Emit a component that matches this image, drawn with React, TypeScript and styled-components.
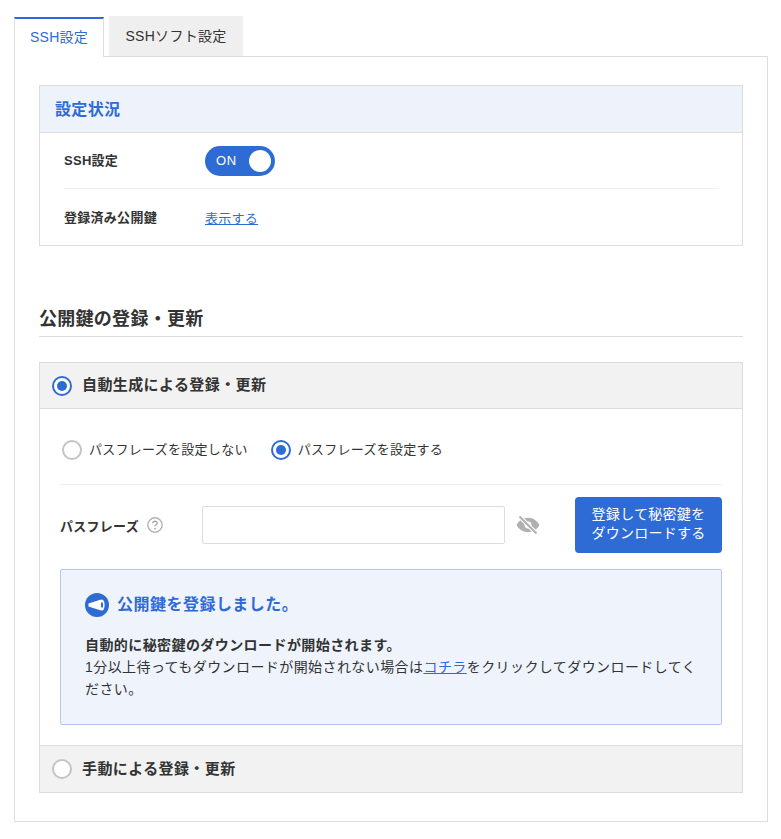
import React from 'react'
import styled, { createGlobalStyle } from 'styled-components'

const Global = createGlobalStyle`
  html, body {
    margin: 0;
    padding: 0;
    background: #fff;
  }
  body {
    font-family: "Liberation Sans", "Noto Sans CJK JP", sans-serif;
    color: #333;
    font-size: 14px;
    letter-spacing: 0.02em;
  }
  * {
    box-sizing: border-box;
  }
`

const Page = styled.div`
  width: 781px;
  height: 839px;
  padding: 16px 13px 0 14px;
`

const TabBar = styled.div`
  display: flex;
  align-items: flex-end;
  height: 41px;
  margin-bottom: -1px;
  position: relative;
  z-index: 1;
`

const Tab = styled.div<{ $active?: boolean }>`
  display: flex;
  align-items: center;
  justify-content: center;
  font-size: 14px;
  ${p =>
    p.$active
      ? `
    width: 90px;
    height: 40px;
    padding-bottom: 5px;
    color: #2f6bd4;
    background: #fff;
    border-top: 2px solid #2f6bd4;
    border-left: 1px solid #ddd;
    border-right: 1px solid #ddd;
    margin-right: 5px;
  `
      : `
    width: 134px;
    height: 40px;
    padding-bottom: 3px;
    margin-bottom: 1px;
    color: #333;
    background: #efefef;
  `}
`

const Panel = styled.div`
  width: 754px;
  height: 766px;
  border: 1px solid #ddd;
  padding: 28px 24px 0;
`

const StatusBox = styled.section`
  border: 1px solid #ddd;
  height: 161px;
`

const StatusHeader = styled.h2`
  margin: 0;
  height: 47px;
  padding: 0 0 3px 15px;
  display: flex;
  align-items: center;
  font-size: 16px;
  font-weight: 700;
  letter-spacing: 0.02em;
  color: #2f6bd4;
  background: #eef3fb;
  border-bottom: 1px solid #ddd;
`

const StatusBody = styled.div`
  padding: 0 24px;
`

const StatusRow = styled.div<{ $last?: boolean }>`
  display: flex;
  align-items: center;
  height: ${p => (p.$last ? '57px' : '56px')};
  border-bottom: ${p => (p.$last ? 'none' : '1px solid #eee')};
`

const RowLabel = styled.div`
  width: 141px;
  font-size: 13px;
  font-weight: 700;
  color: #333;
  padding-bottom: 2px;
`

const Switch = styled.div`
  width: 70px;
  height: 30px;
  border-radius: 15px;
  background: #2f6bd4;
  display: flex;
  align-items: center;
  justify-content: space-between;
  padding: 0 4px 0 11px;
  color: #fff;
  font-size: 13px;
  letter-spacing: 0.04em;
`

const Knob = styled.span`
  width: 22px;
  height: 22px;
  border-radius: 50%;
  background: #fff;
`

const Link = styled.a`
  color: #2f6bd4;
  text-decoration: underline;
`

const ShowLink = styled(Link)`
  font-size: 13px;
`

const SectionTitle = styled.h2`
  margin: 59px 0 25px;
  height: 32px;
  font-size: 18px;
  font-weight: 700;
  color: #333;
  border-bottom: 1px solid #ddd;
  line-height: 29px;
`

const Accordion = styled.section`
  border: 1px solid #ddd;
  height: 431px;
  display: flex;
  flex-direction: column;
`

const AccordionHead = styled.div<{ $bordered?: boolean }>`
  display: flex;
  align-items: center;
  gap: 10px;
  height: 46px;
  flex: none;
  padding-left: 12px;
  background: #f2f2f2;
  font-size: 15px;
  font-weight: 700;
  letter-spacing: 0.4px;
  color: #333;
  border-bottom: ${p => (p.$bordered ? '1px solid #ddd' : 'none')};
`

const HeadText = styled.span`
  position: relative;
  top: -2px;
`

const LastHead = styled(AccordionHead)`
  border-top: 1px solid #ddd;
  height: 47px;
`

const Radio = styled.span<{ $checked?: boolean }>`
  flex: none;
  width: 20px;
  height: 20px;
  border-radius: 50%;
  background: #fff;
  border: 2px solid ${p => (p.$checked ? '#2f6bd4' : '#c4c4c4')};
  display: flex;
  align-items: center;
  justify-content: center;
  &::after {
    content: "";
    display: ${p => (p.$checked ? 'block' : 'none')};
    width: 10px;
    height: 10px;
    border-radius: 50%;
    background: #2f6bd4;
  }
`

const AccordionBody = styled.div`
  flex: 1;
  padding: 0 20px;
`

const RadioRow = styled.div`
  display: flex;
  align-items: center;
  height: 76px;
  padding: 7px 0 0 2px;
  gap: 23px;
  border-bottom: 1px solid #eee;
`

const RadioOption = styled.label`
  display: flex;
  align-items: center;
  gap: 7px;
  font-size: 13px;
  color: #333;
`

const OptionText = styled.span`
  position: relative;
  top: -2px;
`

const FormRow = styled.div`
  display: flex;
  align-items: center;
  height: 84px;
  padding-top: 12px;
  padding-bottom: 16px;
`

const FieldLabel = styled.div`
  width: 142px;
  display: flex;
  align-items: center;
  gap: 8px;
  font-size: 13px;
  font-weight: 700;
`

const PassInput = styled.input`
  width: 303px;
  height: 38px;
  border: 1px solid #ddd;
  border-radius: 2px;
  background: #fff;
  outline: none;
`

const EyeButton = styled.span`
  display: flex;
  margin: 0 35px 0 11px;
`

const SubmitButton = styled.button`
  width: 147px;
  height: 56px;
  border: none;
  border-radius: 4px;
  background: #2f6bd4;
  color: #fff;
  font: inherit;
  font-size: 14px;
  line-height: 19px;
  letter-spacing: 0.02em;
  padding: 0 0 2px;
`

const Notice = styled.div`
  height: 156px;
  border: 1px solid #b3c8ea;
  border-radius: 2px;
  background: #eef3fc;
  padding: 23px 24px 0;
`

const NoticeTitle = styled.div`
  display: flex;
  align-items: center;
  gap: 8px;
  font-size: 16px;
  font-weight: 700;
  letter-spacing: 0.48px;
  color: #2f6bd4;
  margin-bottom: 17px;
  line-height: 24px;
`

const NoticeText = styled.div`
  font-size: 14px;
  line-height: 22px;
  letter-spacing: 0.42px;
`

const Strong = styled.strong`
  display: block;
  font-weight: 700;
`

const HelpIcon = () => (
  <svg width="16" height="16" viewBox="0 0 16 16" fill="none">
    <circle cx="8" cy="8" r="7.2" stroke="#b4b4b4" strokeWidth="1.4" />
    <path
      d="M5.8 6.2c0-1.2 1-1.9 2.2-1.9s2.2.7 2.2 1.8c0 1.6-2.2 1.6-2.2 3.2"
      stroke="#a8a8a8"
      strokeWidth="1.4"
    />
    <circle cx="8" cy="11.6" r="0.9" fill="#a8a8a8" />
  </svg>
)

const EyeOffIcon = () => (
  <svg width="24" height="20" viewBox="0 0 24 20">
    <path
      d="M12 2.8C6.6 2.8 2.5 6.2.6 10c1.9 3.8 6 7.2 11.4 7.2S21.5 13.8 23.4 10c-1.9-3.8-6-7.2-11.4-7.2z"
      fill="#b0b0b0"
    />
    <circle cx="12" cy="10" r="3.4" fill="#fff" />
    <path d="M3.5 1.5l17 17" stroke="#fff" strokeWidth="4" />
    <path d="M3.5 1.5l17 17" stroke="#b0b0b0" strokeWidth="2" />
  </svg>
)

const MegaphoneIcon = () => (
  <svg width="24" height="24" viewBox="0 0 24 24">
    <circle cx="12" cy="12" r="12" fill="#2f6bd4" />
    <path d="M3.5 10.6L16 6.6v10.8L3.5 13.4z" fill="#fff" />
    <ellipse cx="17" cy="12" rx="2.6" ry="5.6" fill="#fff" />
    <ellipse cx="17" cy="12" rx="1.1" ry="3" fill="#2f6bd4" />
  </svg>
)

export default function App() {
  return (
    <Page>
      <Global />
      <TabBar>
        <Tab $active>SSH設定</Tab>
        <Tab>SSHソフト設定</Tab>
      </TabBar>
      <Panel>
        <StatusBox>
          <StatusHeader>設定状況</StatusHeader>
          <StatusBody>
            <StatusRow>
              <RowLabel>SSH設定</RowLabel>
              <Switch>
                ON
                <Knob />
              </Switch>
            </StatusRow>
            <StatusRow $last>
              <RowLabel>登録済み公開鍵</RowLabel>
              <ShowLink href="#">表示する</ShowLink>
            </StatusRow>
          </StatusBody>
        </StatusBox>

        <SectionTitle>公開鍵の登録・更新</SectionTitle>

        <Accordion>
          <AccordionHead $bordered>
            <Radio $checked />
            <HeadText>自動生成による登録・更新</HeadText>
          </AccordionHead>
          <AccordionBody>
            <RadioRow>
              <RadioOption>
                <Radio />
                <OptionText>パスフレーズを設定しない</OptionText>
              </RadioOption>
              <RadioOption>
                <Radio $checked />
                <OptionText>パスフレーズを設定する</OptionText>
              </RadioOption>
            </RadioRow>
            <FormRow>
              <FieldLabel>
                パスフレーズ
                <HelpIcon />
              </FieldLabel>
              <PassInput type="password" />
              <EyeButton>
                <EyeOffIcon />
              </EyeButton>
              <SubmitButton>
                登録して秘密鍵を
                <br />
                ダウンロードする
              </SubmitButton>
            </FormRow>
            <Notice>
              <NoticeTitle>
                <MegaphoneIcon />
                公開鍵を登録しました。
              </NoticeTitle>
              <NoticeText>
                <Strong>自動的に秘密鍵のダウンロードが開始されます。</Strong>
                1分以上待ってもダウンロードが開始されない場合は
                <Link href="#">コチラ</Link>
                をクリックしてダウンロードしてください。
              </NoticeText>
            </Notice>
          </AccordionBody>
          <LastHead>
            <Radio />
            <HeadText>手動による登録・更新</HeadText>
          </LastHead>
        </Accordion>
      </Panel>
    </Page>
  )
}
